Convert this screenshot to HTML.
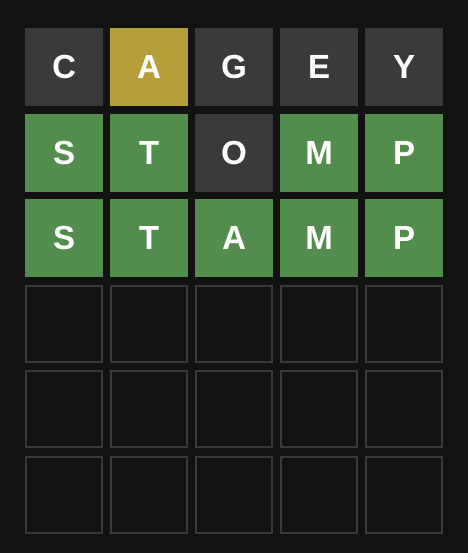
<!DOCTYPE html>
<html><head><style>
html,body{margin:0;padding:0;background:#121213;width:468px;height:553px;overflow:hidden}
.g{position:absolute;left:25px;top:28px;display:grid;grid-template-columns:repeat(5,78px);grid-auto-rows:78px;column-gap:7px;row-gap:7.5px}
.t{box-sizing:border-box;display:flex;align-items:center;justify-content:center;color:#fff;font:bold 33px "Liberation Sans",sans-serif}
.x{background:#3a3a3c}.y{background:#b59f3b}.v{background:#538d4e}.e{border:2px solid #3a3a3c}
</style></head><body>
<div class="g">
<div class="t x">C</div><div class="t y">A</div><div class="t x">G</div><div class="t x">E</div><div class="t x">Y</div>
<div class="t v">S</div><div class="t v">T</div><div class="t x">O</div><div class="t v">M</div><div class="t v">P</div>
<div class="t v">S</div><div class="t v">T</div><div class="t v">A</div><div class="t v">M</div><div class="t v">P</div>
<div class="t e"></div><div class="t e"></div><div class="t e"></div><div class="t e"></div><div class="t e"></div>
<div class="t e"></div><div class="t e"></div><div class="t e"></div><div class="t e"></div><div class="t e"></div>
<div class="t e"></div><div class="t e"></div><div class="t e"></div><div class="t e"></div><div class="t e"></div>
</div>
</body></html>
